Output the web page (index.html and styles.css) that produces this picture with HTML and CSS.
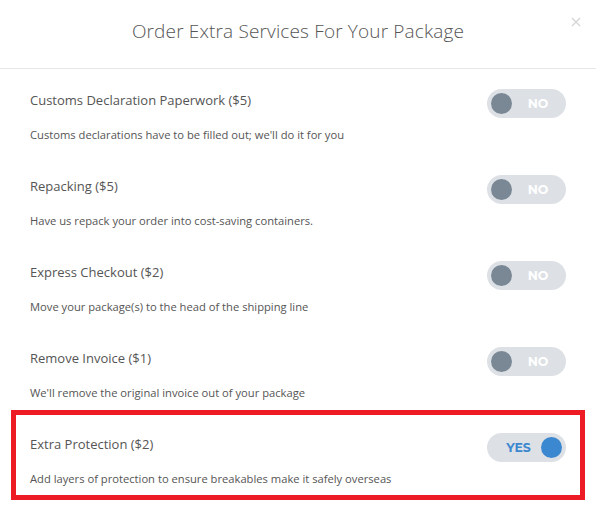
FILE: index.html
```html
<!DOCTYPE html>
<html>
<head>
<meta charset="utf-8">
<link rel="stylesheet" href="styles.css">
</head>
<body>
<div class="modal">
  <div class="header">
    <h1 class="heading">Order Extra Services For Your Package</h1>
    <button class="close" aria-label="Close">
      <svg width="10" height="10" viewBox="0 0 10 10"><path d="M1 1L9 9M9 1L1 9" stroke="#d4d4d4" stroke-width="1.2" fill="none"/></svg>
    </button>
  </div>
  <div class="rows">
    <div class="row">
      <div class="top">
        <div class="title">Customs Declaration Paperwork ($5)</div>
        <div class="toggle off"><span class="knob"></span><span class="label">NO</span></div>
      </div>
      <div class="desc">Customs declarations have to be filled out; we'll do it for you</div>
    </div>
    <div class="row">
      <div class="top">
        <div class="title">Repacking ($5)</div>
        <div class="toggle off"><span class="knob"></span><span class="label">NO</span></div>
      </div>
      <div class="desc">Have us repack your order into cost-saving containers.</div>
    </div>
    <div class="row">
      <div class="top">
        <div class="title">Express Checkout ($2)</div>
        <div class="toggle off"><span class="knob"></span><span class="label">NO</span></div>
      </div>
      <div class="desc">Move your package(s) to the head of the shipping line</div>
    </div>
    <div class="row">
      <div class="top">
        <div class="title">Remove Invoice ($1)</div>
        <div class="toggle off"><span class="knob"></span><span class="label">NO</span></div>
      </div>
      <div class="desc">We'll remove the original invoice out of your package</div>
    </div>
    <div class="row highlight">
      <div class="top">
        <div class="title">Extra Protection ($2)</div>
        <div class="toggle on"><span class="label">YES</span><span class="knob"></span></div>
      </div>
      <div class="desc">Add layers of protection to ensure breakables make it safely overseas</div>
    </div>
  </div>
</div>
</body>
</html>
```
FILE: styles.css
```css
* { box-sizing: border-box; }
html, body { margin: 0; padding: 0; background: #fff; }
body { font-family: "Open Sans", "Liberation Sans", sans-serif; color: #555; }
.modal { width: 596px; height: 513px; background: #fff; }
.header {
  position: relative;
  height: 69px;
  border-bottom: 1px solid #e6e6e6;
  display: flex;
  align-items: center;
  justify-content: center;
}
.heading {
  margin: 0;
  font-size: 19px;
  font-weight: 300;
  color: #555;
  letter-spacing: 0.15px;
  padding-bottom: 6px;
}
.close {
  position: absolute;
  top: 16px;
  right: 14px;
  width: 12px;
  height: 12px;
  padding: 0;
  border: 0;
  background: none;
  display: flex;
  align-items: center;
  justify-content: center;
}
.row {
  position: relative;
  height: 86px;
  padding: 20px 30px 0 30px;
}
.top {
  display: flex;
  align-items: center;
  justify-content: space-between;
  height: 29px;
}
.title {
  font-size: 13px;
  line-height: 20px;
  margin-bottom: 7px;
  color: #555;
}
.desc {
  margin-top: 9px;
  font-size: 11.2px;
  line-height: 16px;
  color: #555;
}
.toggle {
  width: 79px;
  height: 29px;
  border-radius: 15px;
  background: #dde1e5;
  display: flex;
  align-items: center;
  padding: 0 4px;
}
.knob {
  width: 21px;
  height: 21px;
  border-radius: 50%;
  flex: none;
}
.label {
  flex: 1;
  text-align: center;
  font-family: "Montserrat", "Open Sans", sans-serif;
  font-weight: 700;
  font-size: 12.5px;
}
.off .knob { background: #7a8896; }
.off .label { color: #fff; padding-left: 2px; }
.on .knob { background: #3b87d0; }
.on .label { color: #3b87d0; padding-left: 5px; }
.highlight::after {
  content: "";
  position: absolute;
  top: -3px;
  bottom: -1px;
  left: 11px;
  right: 11px;
  border: 5px solid #ed1c24;
  pointer-events: none;
}
```
